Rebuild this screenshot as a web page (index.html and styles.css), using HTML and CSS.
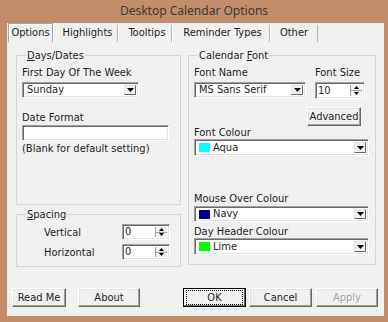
FILE: index.html
```html
<!DOCTYPE html>
<html lang="en">
<head>
    <meta charset="UTF-8">
    <title>Desktop Calendar Options</title>
    <link rel="stylesheet" href="styles.css">
</head>
<body>

<div class="window">
  <div class="titlebar">Desktop Calendar Options</div>

  <div class="client">
    <div class="tabs">
      <div class="tab tab-active">Options</div>
      <div class="tab tab-highlights">Highlights</div>
      <div class="tab tab-tooltips">Tooltips</div>
      <div class="tab tab-reminders">Reminder Types</div>
      <div class="tab tab-other">Other</div>
    </div>

    <div class="panel">
      <div class="col col-left">
        <fieldset class="group group-days">
          <legend><u>D</u>ays/Dates</legend>
          <p class="label first-label">First Day Of The Week</p>
          <div class="field combo combo-day">
            <span class="combo-text">Sunday</span>
            <span class="drop-btn"><svg width="7" height="4" viewBox="0 0 7 4"><path d="M0 0h7L3.5 4z" fill="#000"/></svg></span>
          </div>
          <p class="label date-label">Date Format</p>
          <div class="field textbox"></div>
          <p class="label hint">(Blank for default setting)</p>
        </fieldset>

        <fieldset class="group group-spacing">
          <legend><u>S</u>pacing</legend>
          <div class="spin-row">
            <span class="spin-label">Vertical</span>
            <div class="field spin spin-small">
              <span class="spin-text">0</span>
              <span class="spin-btns">
                <span class="spin-up"><svg width="5" height="3" viewBox="0 0 5 3"><path d="M0 3h5L2.5 0z" fill="#000"/></svg></span>
                <span class="spin-down"><svg width="5" height="3" viewBox="0 0 5 3"><path d="M0 0h5L2.5 3z" fill="#000"/></svg></span>
              </span>
            </div>
          </div>
          <div class="spin-row spin-row-2">
            <span class="spin-label">Horizontal</span>
            <div class="field spin spin-small">
              <span class="spin-text">0</span>
              <span class="spin-btns">
                <span class="spin-up"><svg width="5" height="3" viewBox="0 0 5 3"><path d="M0 3h5L2.5 0z" fill="#000"/></svg></span>
                <span class="spin-down"><svg width="5" height="3" viewBox="0 0 5 3"><path d="M0 0h5L2.5 3z" fill="#000"/></svg></span>
              </span>
            </div>
          </div>
        </fieldset>
      </div>

      <div class="col col-right">
        <fieldset class="group group-font">
          <legend>Calendar <u>F</u>ont</legend>
          <div class="font-row">
            <div class="font-name">
              <p class="label first-label">Font Name</p>
              <div class="field combo combo-font">
                <span class="combo-text">MS Sans Serif</span>
                <span class="drop-btn"><svg width="7" height="4" viewBox="0 0 7 4"><path d="M0 0h7L3.5 4z" fill="#000"/></svg></span>
              </div>
            </div>
            <div class="font-size">
              <p class="label first-label">Font Size</p>
              <div class="field spin spin-size">
                <span class="spin-text">10</span>
                <span class="spin-btns">
                  <span class="spin-up"><svg width="5" height="3" viewBox="0 0 5 3"><path d="M0 3h5L2.5 0z" fill="#000"/></svg></span>
                  <span class="spin-down"><svg width="5" height="3" viewBox="0 0 5 3"><path d="M0 0h5L2.5 3z" fill="#000"/></svg></span>
                </span>
              </div>
            </div>
          </div>

          <div class="adv-row">
            <div class="button btn-advanced">Advanced</div>
          </div>

          <p class="label colour-label">Font Colour</p>
          <div class="field combo combo-colour">
            <span class="swatch" style="background:#00ffff"></span>
            <span class="combo-text">Aqua</span>
            <span class="drop-btn"><svg width="7" height="4" viewBox="0 0 7 4"><path d="M0 0h7L3.5 4z" fill="#000"/></svg></span>
          </div>

          <p class="label mouse-label">Mouse Over Colour</p>
          <div class="field combo combo-colour combo-navy">
            <span class="swatch" style="background:#000080"></span>
            <span class="combo-text">Navy</span>
            <span class="drop-btn"><svg width="7" height="4" viewBox="0 0 7 4"><path d="M0 0h7L3.5 4z" fill="#000"/></svg></span>
          </div>

          <p class="label header-label">Day Header Colour</p>
          <div class="field combo combo-colour">
            <span class="swatch" style="background:#00ff00"></span>
            <span class="combo-text">Lime</span>
            <span class="drop-btn"><svg width="7" height="4" viewBox="0 0 7 4"><path d="M0 0h7L3.5 4z" fill="#000"/></svg></span>
          </div>
        </fieldset>
      </div>
    </div>

    <div class="buttons">
      <div class="button btn-readme">Read Me</div>
      <div class="button btn-about">About</div>
      <div class="button btn-ok"><span class="focus">OK</span></div>
      <div class="button btn-cancel">Cancel</div>
      <div class="button btn-apply">Apply</div>
    </div>
  </div>
</div>

</body>
</html>
```

FILE: styles.css
```css
/*CSS RESETS*/

body {
    margin: 0;
    background-color: #c18d6a;
    font-family: "DejaVu Sans Condensed", "DejaVu Sans", sans-serif;
    font-size: 11px;
    color: #1e1e1e;
}

p {
    margin: 0;
}

fieldset {
    margin: 0;
    padding: 0;
    min-width: 0;
}


/*CSS START*/

.window {
    display: flex;
    flex-direction: column;
    width: 388px;
    height: 322px;
}

.titlebar {
    height: 23px;
    line-height: 22px;
    text-align: center;
    font-family: "Noto Sans", sans-serif;
    font-size: 12px;
    color: #3b3b3b;
}

.client {
    flex: 1;
    display: flex;
    flex-direction: column;
    margin: 0 4px 6px 7px;
    background-color: #f0f0f0;
}

/* tabs */

.tabs {
    display: flex;
    height: 19px;
    padding-left: 1px;
}

.tab {
    box-sizing: border-box;
    height: 17px;
    margin-top: 2px;
    line-height: 15px;
    text-align: center;
    border-left: 1px solid #fff;
    border-right: 1px solid #b4b4b4;
}

.tab-active {
    height: 19px;
    margin-top: 0;
    width: 45px;
    line-height: 17px;
    border: 1px solid #a8a8a8;
    border-bottom: none;
    box-shadow: inset 1px 1px 0 #fff;
}

.tab-highlights { width: 65px; padding-left: 4px; }
.tab-tooltips { width: 54px; padding-left: 4px; }
.tab-reminders { width: 98px; padding-left: 3px; }
.tab-other { width: 48px; }

/* panel + groups */

.panel {
    flex: 1;
    display: flex;
    gap: 7px;
    padding: 7px 0 0 9px;
}

.col {
    display: flex;
    flex-direction: column;
}

.col-left {
    width: 165px;
}

.col-right {
    width: 188px;
}

.group {
    box-sizing: border-box;
    border: 1px solid #d5d5d5;
    padding: 0 5px;
}

.group legend {
    padding: 0 1px;
    margin-left: 4px;
    line-height: 13px;
}

.group-days {
    height: 156px;
}

.group-spacing {
    height: 59px;
    margin-top: 3px;
}

.group-font {
    height: 216px;
    padding-right: 6px;
}

.label {
    line-height: 13px;
    white-space: nowrap;
}

.first-label {
    margin-top: 4px;
    margin-bottom: 3px;
}

.date-label {
    margin-top: 13px;
    margin-bottom: 1px;
}

.hint {
    margin-top: 1px;
}

/* sunken fields */

.field {
    box-sizing: border-box;
    display: flex;
    align-items: center;
    height: 16px;
    border: 1px solid;
    border-color: #a0a0a0 #fff #fff #a0a0a0;
    box-shadow: inset 1px 1px 0 #696969, inset -1px -1px 0 #e3e3e3;
    background-color: #fff;
    padding: 2px;
}

.combo-day {
    width: 117px;
}

.textbox {
    width: 147px;
}

.combo-text {
    flex: 1;
    padding-left: 2px;
    line-height: 12px;
    white-space: nowrap;
}

.drop-btn {
    box-sizing: border-box;
    display: flex;
    align-items: center;
    justify-content: center;
    width: 12px;
    align-self: stretch;
    background-color: #f0f0f0;
    border: 1px solid;
    border-color: #e3e3e3 #696969 #696969 #e3e3e3;
}

/* spinners */

.spin-row {
    display: flex;
    align-items: center;
    margin-top: 3px;
    padding: 0 5px 0 22px;
}

.spin-row-2 {
    margin-top: 4px;
}

.spin-label {
    flex: 1;
}

.spin-small {
    width: 48px;
}

.spin-text {
    flex: 1;
    line-height: 12px;
}

.spin-btns {
    display: flex;
    flex-direction: column;
    align-self: stretch;
    width: 11px;
    border-left: 1px solid #a0a0a0;
}

.spin-up,
.spin-down {
    flex: 1;
    display: flex;
    align-items: center;
    justify-content: center;
    background-color: #f0f0f0;
}

.spin-up {
    border-bottom: 1px solid #a0a0a0;
}

/* font group */

.font-row {
    display: flex;
}

.combo-font {
    width: 112px;
}

.font-size {
    margin-left: 9px;
}

.spin-size {
    width: 50px;
    height: 17px;
}

.adv-row {
    display: flex;
    justify-content: flex-end;
    margin-top: 8px;
    padding-right: 8px;
}

.combo-colour {
    height: 17px;
}

.combo-colour .combo-text {
    padding-left: 3px;
}

.swatch {
    width: 11px;
    height: 9px;
    margin-left: 2px;
}

.colour-label {
    margin-top: 0;
}

.mouse-label {
    margin-top: 36px;
    margin-bottom: 1px;
}

.combo-navy {
    height: 16px;
}

.header-label {
    margin-top: 3px;
}

/* buttons */

.button {
    box-sizing: border-box;
    display: flex;
    align-items: center;
    justify-content: center;
    height: 19px;
    border: 1px solid;
    border-color: #fff #696969 #696969 #fff;
    box-shadow: inset -1px -1px 0 #a0a0a0, inset 1px 1px 0 #e3e3e3;
    background-color: #f0f0f0;
}

.btn-advanced {
    width: 54px;
}

.buttons {
    display: flex;
    padding: 0 6px 9px 5px;
}

.btn-readme { width: 54px; }
.btn-about { width: 62px; margin-left: 12px; }
.btn-ok { width: 63px; margin-left: auto; border-color: #000; box-shadow: inset -1px -1px 0 #696969, inset 1px 1px 0 #fff; }
.btn-cancel { width: 63px; margin-left: 3px; }
.btn-apply { width: 62px; margin-left: 4px; color: #a0a0a0; text-shadow: 1px 1px 0 #fff; }

.focus {
    box-sizing: border-box;
    display: flex;
    align-items: center;
    justify-content: center;
    width: 55px;
    height: 13px;
    outline: 1px dotted #000;
}
```
